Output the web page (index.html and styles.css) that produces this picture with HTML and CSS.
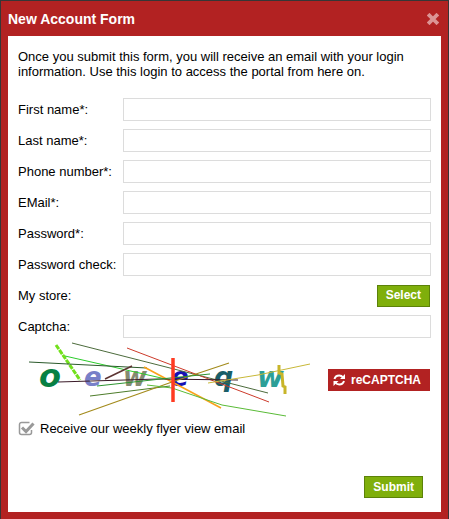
FILE: index.html
```html
<!DOCTYPE html>
<html lang="en">
<head>
<meta charset="utf-8">
<title>New Account Form</title>
<link rel="stylesheet" href="styles.css">
</head>
<body>
<section class="dialog" aria-labelledby="title">
  <header class="dialog-header">
    <h1 id="title">New Account Form</h1>
    <button class="close" type="button" aria-label="Close">
      <svg width="12" height="12" viewBox="0 0 12 12"><path d="M2.5 2.5l7 7M9.5 2.5l-7 7" stroke="currentColor" stroke-width="3.8" stroke-linecap="square"/></svg>
    </button>
  </header>
  <form class="dialog-body">
    <p class="intro">Once you submit this form, you will receive an email with your login information. Use this login to access the portal from here on.</p>
    <div class="fields">
      <label for="first">First name*:</label><input class="field" id="first" type="text">
      <label for="last">Last name*:</label><input class="field" id="last" type="text">
      <label for="phone">Phone number*:</label><input class="field" id="phone" type="tel">
      <label for="email">EMail*:</label><input class="field" id="email" type="email">
      <label for="pass">Password*:</label><input class="field" id="pass" type="password">
      <label for="check">Password check:</label><input class="field" id="check" type="password">
      <label for="store">My store:</label><button class="btn store" id="store" type="button">Select</button>
      <label for="captcha">Captcha:</label><input class="field" id="captcha" type="text">
    </div>
    <div class="captcha-row">
      <svg class="captcha" width="300" height="80" viewBox="0 0 300 80" role="img" aria-label="Captcha image">
        <g class="captcha-text">
          <text x="21" y="47" font-size="32" fill="#078043">o</text>
          <text x="66" y="46" font-size="26" fill="#7880c8">e</text>
          <text x="105" y="46" font-size="26" fill="#858b72">w</text>
          <text x="153" y="46" font-size="26" fill="#1712b5">e</text>
          <text x="196" y="46" font-size="27" fill="#195e68">q</text>
          <text x="239" y="47" font-size="29" fill="#2c9f97">w</text>
        </g>
        <g fill="none">
          <path d="M38 5l24 35" stroke="#72e01c" stroke-width="3" stroke-dasharray="5 1"/>
          <path d="M54 3l196 50" stroke="#4c6b3c"/>
          <path d="M109 8l142 54" stroke="#cc3a2a"/>
          <path d="M47 16l105 24" stroke="#2ccc2c"/>
          <path d="M11 22l118 6" stroke="#2b5a2b"/>
          <path d="M114 26l-27 13" stroke="#5c3432" stroke-width="1.5"/>
          <path d="M126 27l77 41" stroke="#f9a21a" stroke-width="1.6"/>
          <path d="M40 42l100-3 80 1" stroke="#3a1a28"/>
          <path d="M72 56l80-10" stroke="#4d7c2a"/>
          <path d="M61 75l93-33 57-19" stroke="#a38b1c" stroke-width="1.2"/>
          <path d="M79 46l73-8 40-4" stroke="#2d9430"/>
          <path d="M129 45l25 3 50 17 64 11" stroke="#5abb37"/>
          <path d="M155 18v44" stroke="#ff3b22" stroke-width="3.5"/>
          <path d="M190 43l50-8 52-11" stroke="#c8b838"/>
          <path d="M261 25v8l3 1 1 12 2 1v7" stroke="#c8b52a" stroke-width="3"/>
        </g>
      </svg>
      <button class="recaptcha" type="button">
        <svg width="13" height="12" viewBox="0 0 13 12"><g fill="none" stroke="currentColor" stroke-width="2"><path d="M1.5 5C2 3 4 1.5 6.200 1.500c1.700 0 3 .8 3.900 2M11 7c-.6 2-2.500 3.500-4.700 3.500-1.600 0-3-.8-3.900-2"/></g><path d="M12 0v5H7zM.5 12V7h5z" fill="currentColor"/></svg>
        reCAPTCHA
      </button>
    </div>
    <label class="subscribe">
      <input class="tick" type="checkbox" checked>
      <svg class="tick-mark" width="17" height="15" viewBox="0 0 17 15" fill="none" stroke="#999"><path d="M13.500 9v2.500a2 2 0 0 1-2 2h-8a2 2 0 0 1-2-2v-8a2 2 0 0 1 2-2h8" stroke-width="1.500"/><path d="M4 6.500l4 4 7.500-8" stroke-width="3"/></svg>
      <span>Receive our weekly flyer view email</span>
    </label>
    <div class="actions"><button class="btn" type="submit">Submit</button></div>
  </form>
</section>
</body>
</html>
```

FILE: styles.css
```css
* {
  box-sizing: border-box;
}

body {
  margin: 0;
  padding: 1px 1px 0;
  background: #363636;
  color: #000;
  font: 13px/15px "Liberation Sans", Arial, sans-serif;
}

button,
input {
  margin: 0;
  font: inherit;
}

.dialog {
  padding: 0 7px 7px;
  background: #b22222;
}

.dialog-header {
  display: flex;
  align-items: center;
  justify-content: space-between;
  height: 35px;
  color: #fff;
}

h1 {
  margin: 0;
  font-size: 14px;
  line-height: 16px;
}

.close {
  display: flex;
  margin-right: 2px;
  padding: 0;
  border: 0;
  background: none;
  color: #dc9494;
}

.dialog-body {
  padding: 13px 10px 14px;
  background: #fff;
}

.intro {
  margin: 0 0 19px;
}

.fields {
  display: grid;
  grid-template-columns: 105px 1fr;
  grid-auto-rows: 23px;
  row-gap: 8px;
  align-items: center;
}

.field {
  width: 100%;
  height: 23px;
  padding: 0 4px;
  border: 1px solid #dcdcdc;
  background: #fff;
}

.btn {
  height: 22px;
  padding: 0 8px;
  border: 1px solid #5c8209;
  background: #7faf0b;
  color: #fff;
  font-size: 12px;
  font-weight: bold;
}

.store {
  justify-self: end;
  margin-right: 1px;
}

.captcha-row {
  display: flex;
  align-items: center;
  justify-content: space-between;
  margin-top: 2px;
}

.captcha {
  flex: none;
}

.captcha-text {
  font-family: "DejaVu Sans", sans-serif;
  font-weight: bold;
  font-style: oblique;
}

.recaptcha {
  display: flex;
  flex: none;
  align-items: center;
  gap: 5px;
  height: 22px;
  margin-right: 1px;
  padding: 0 9px 0 5px;
  border: 0;
  background: #b22222;
  color: #fff;
  font-size: 12px;
  font-weight: bold;
}

.subscribe {
  display: flex;
  position: relative;
  align-items: center;
  gap: 5px;
  margin-top: 1px;
}

.tick {
  appearance: none;
  width: 17px;
  height: 15px;
}

.tick-mark {
  position: absolute;
  left: 0;
  visibility: hidden;
}

.tick:checked + .tick-mark {
  visibility: visible;
}

.actions {
  display: flex;
  justify-content: flex-end;
  margin: 40px 8px 0 0;
}
```
